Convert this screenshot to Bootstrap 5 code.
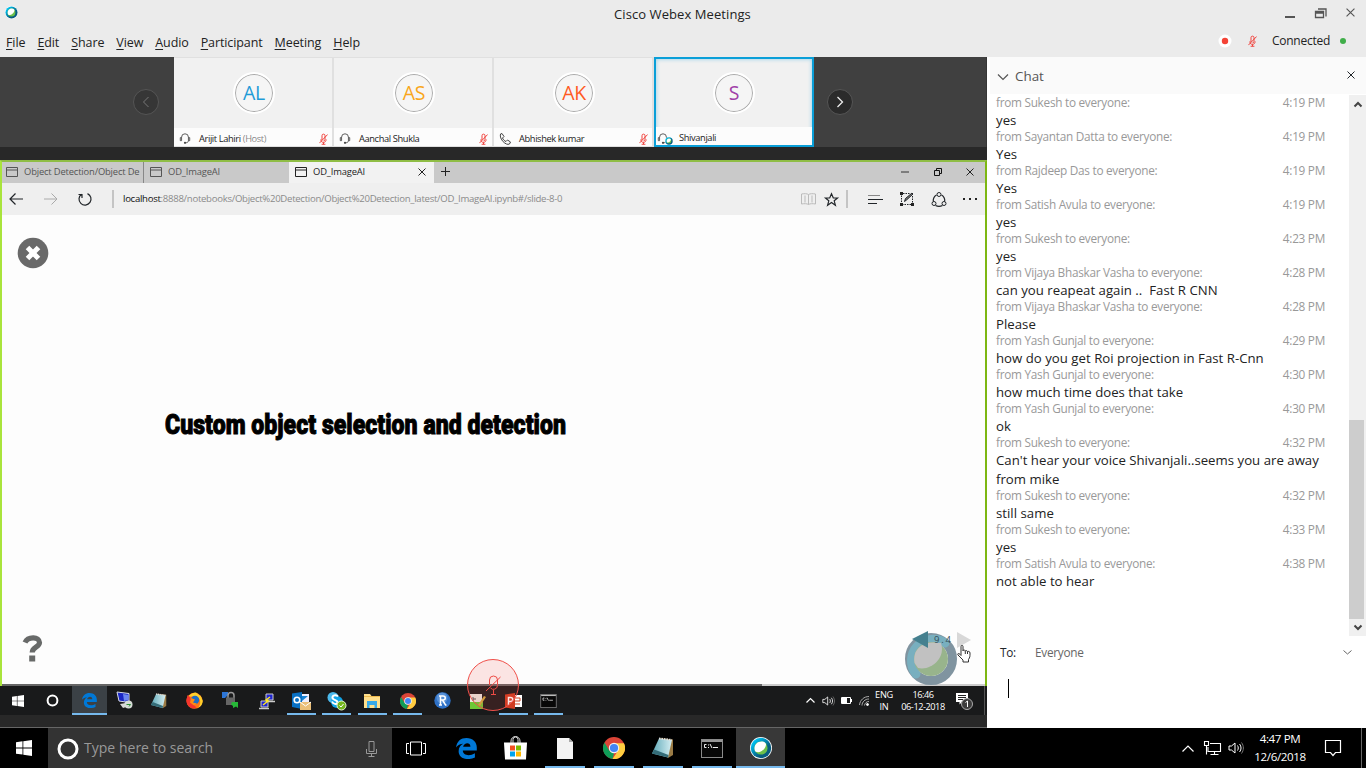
<!DOCTYPE html>
<html lang="en">
<head>
<meta charset="utf-8">
<title>Cisco Webex Meetings</title>
<link rel="stylesheet" href="https://cdn.jsdelivr.net/npm/bootstrap@5.3.0/dist/css/bootstrap.min.css">
<style>
body{width:1366px;height:768px;overflow:hidden;font-family:"Open Sans","Noto Sans",sans-serif;font-size:13px;line-height:1.2;color:#222;background:#ebebeb}
svg{display:block;flex:none;overflow:visible}
.line-ic{fill:none;stroke:currentColor}
.title-row{height:29px}
.app-title{width:140px;margin-left:597px;font-size:13px;letter-spacing:.08px;white-space:nowrap}
.win-controls{color:#555;padding-right:11px}
.menu-row{height:28px;padding:0 20px 2px 6px;gap:12px;font-size:12.5px;letter-spacing:-.1px}
.menu-row u{text-underline-offset:2px}
.stage{height:671px}
.left-pane{width:987px;background:#282828}
.people{height:90px;background:#404040;border-right:1px solid #363636}
.round-btn{width:26px;height:26px;border-radius:50%;background:#2b2b2b;border:1px solid #555;color:#eee}
.round-btn.off{margin:0 15px 0 133px;color:#777;background:#363636}
.tile{width:160px;height:90px;background:#f1f1f1;border:1px solid #e0e0e0;border-left:0;border-right-width:2px}
.tile .face{padding-left:2px}
.tile.active-tile{border:2px solid #0a9fd8;box-shadow:inset 0 0 4px #8fd0ea}
.tile.active-tile .face{padding-left:0}
.avatar{width:42px;height:42px;border-radius:50%;border:2px solid #fff;background:#f5f5f5;box-shadow:inset 0 0 0 1px #aaa;font-size:19.5px;letter-spacing:-.3px;padding-bottom:1px}
.tile-foot{height:18px;background:#fcfcfc;font-size:9.3px;letter-spacing:-.38px;color:#222;padding:3px 4px 0 5px}
.remote{margin-top:13px;height:526px;border:2px solid #7db713;border-left-color:#a9e43c;border-top-color:#8fbd45;border-bottom:0;background:#fdfdfd}
.tabs{height:21px;background:#c9c9c9;font-size:9.4px;letter-spacing:-.16px;color:#555}
.tab-item{width:145px;padding:0 0 2px 4px;gap:6px;height:21px}
.addr{height:32px;background:#efefef;font-size:9.6px;letter-spacing:-.29px;color:#8b8b8b}
.cell{display:flex;align-items:center;justify-content:center;flex:none;height:100%}
.tabs .cell{padding-bottom:2px}
.rule{width:2px;height:18px;background:#c4c4c4;flex:none}
.slide{height:469px}
.slide-x{left:15px;top:22px}
.slide-q{left:21px;top:420px}
.slide-title{left:163px;top:192px;font-family:Roboto,sans-serif;font-weight:900;font-size:28.5px;line-height:36px;color:#000;white-space:nowrap;transform:scaleX(.811);transform-origin:0 50%;-webkit-text-stroke:1px #000}
.progress-line{height:2px;background:#ccc}
.progress-line div{height:2px;width:760px;background:#666}
.rbar{height:29px;background:#191a1b;color:#fff;margin:0 -2px;position:relative}
.rcell{width:35.3px;height:29px;display:flex;align-items:center;justify-content:center;flex:none}
.lit{background:linear-gradient(#76b9ed,#76b9ed) center bottom/29px 2px no-repeat}
.lit-full{background:linear-gradient(#76b9ed,#76b9ed) center bottom/100% 2px no-repeat #3b4146}
.rtime{font-size:9.2px;line-height:12px;text-align:center;letter-spacing:-.3px}
.foot-gap{margin-top:29px;height:13px;border-bottom:1px solid #666}
.float-mic{left:467px;top:602px;width:52px;height:52px;border-radius:50%;border:1px solid #f0504a;background:#f0504a24;color:#ee4b45}
.float-ball{left:905px;top:576px}
.hand{left:957px;top:588px}
.arrows{left:912px;top:574px;font-size:9.5px;color:#334d55}
.chat{width:379px;background:#fff}
.chat-head{height:37px;margin-left:3px;background:#fafafa;color:#555;font-size:13.4px;padding:2px 11px 0 8px}
.chat-list{height:541px;width:353px;padding:0 15px 0 9px;margin-top:1px}
.who{font-size:11.8px;line-height:15px;height:16px;color:#999;letter-spacing:-.28px}
.msg{font-size:13.2px;line-height:19px;color:#222;white-space:pre;margin-bottom:-1px;letter-spacing:.02px}
.sbar{width:17px;height:541px;background:#f0f0f0;margin-top:1px}
.sthumb{width:15px;height:199px;background:#cdcdcd;margin-top:auto}
.to-row{height:34px;padding:0 14px 1px 13px;font-size:11.8px;letter-spacing:-.25px;color:#666}
.caret{width:1px;height:19px;background:#000;margin:9px 0 0 21px}
.taskbar{height:40px;background:#000;color:#fff}
.search{width:344px;background:#333;color:#999;font-size:14px;letter-spacing:.02px;padding:1px 15px 0 8px;gap:5px}
.tcell{width:49px;height:40px;display:flex;align-items:center;justify-content:center;flex:none}
.tcell.lit{background-size:40px 2px}
.clock{font-size:11.6px;line-height:18px;letter-spacing:-.4px;text-align:center}
</style>
<script src="https://cdn.jsdelivr.net/npm/bootstrap@5.3.0/dist/js/bootstrap.bundle.min.js"></script>
</head>
<body>
<svg width="0" height="0" class="position-absolute">
<defs>
<linearGradient id="gball" x1="0" x2="1" y1="0" y2="1"><stop offset=".2" stop-color="#00bceb"/><stop offset=".65" stop-color="#075c80"/></linearGradient>
<linearGradient id="gnote" x1="0" x2="1"><stop offset="0" stop-color="#5fa9b8"/><stop offset="1" stop-color="#d5eef2"/></linearGradient>
<symbol id="webex" viewBox="0 0 20 20"><circle cx="10" cy="10" r="10" fill="#fff"/><circle cx="10" cy="10" r="9.3" fill="url(#gball)"/><circle cx="10" cy="10" r="6" fill="#6cc04a"/><path d="M4.6 13C2.8 8 6 4 10.500 4C14 4 15.500 6 14 9C12 13 8 15 4.600 13Z" fill="#fff"/></symbol>
<symbol id="micoff" viewBox="0 0 12 16"><path d="M4 9.500V3.500a2 2 0 0 1 4 0v5a2 2 0 0 1-2 2M2.500 8.500c0 3 1.500 4 3.500 4s3.500-1.500 3.500-4M6 12.500V15M3.500 15h5M11.500 2L.500 13.500" fill="none" stroke="#f0403a" stroke-width="1.300"/></symbol>
<symbol id="headset" viewBox="0 0 14 14"><path d="M3 9.500V5.500a4 4 0 0 1 8 0v4M3 6H1.500v3.500H3M11 6h1.500v3.500H11M11 9.500c0 2-2 2.500-3.500 2.500" fill="none" stroke="#444"/><circle cx="7" cy="12" r="1.300" fill="#444"/></symbol>
<symbol id="win" viewBox="0 0 16 16"><path fill="#fff" d="M0 2.200L6.500 1.300V7.500H0zM7.300 1.200L16 0V7.500H7.300zM0 8.400h6.500v6.200L0 13.700zM7.300 8.400H16V16l-8.700-1.200z"/></symbol>
<symbol id="edge" viewBox="0 0 20 20"><path fill="#0078d7" d="M0 9C1 3 4.600 0 10 0c6 0 10 4 9.800 9.500V12H6.500c0 5 7 5.500 11.500 2.500v4C11 22 2.500 19.500 2.500 12.500C2.500 9 4.500 6.500 7 5.500C4 5.500 1.500 7 0 9zM6.800 8.300h6.900C14 3.500 7.500 4 6.800 8.300z"/></symbol>
<symbol id="chrome" viewBox="0 0 22 22"><circle cx="11" cy="11" r="11" fill="#db4437"/><path d="M1.500 5.500L6.200 13.500L11 16.500L9.500 22A11 11 0 0 1 1.500 5.500z" fill="#0f9d58"/><path d="M11 6.200H20.900A11 11 0 0 1 9.500 22L15.200 13.500z" fill="#ffcd40"/><circle cx="11" cy="11" r="5.200" fill="#f1f1f1"/><circle cx="11" cy="11" r="4.100" fill="#4285f4"/></symbol>
<symbol id="note" viewBox="0 0 22 22"><path d="M8 1L21 2.500V18L16 21z" fill="#9a7b45"/><path d="M7 1.500L20 3L16 20.500L0 16.500z" fill="url(#gnote)"/><path d="M0 16.500L2.200 12.500L16.500 18L16 20.500z" fill="#346c78"/><path d="M7 1.500L20 3" stroke="#ddd" stroke-width="2" stroke-dasharray="1.500 1"/></symbol>
<symbol id="cmd" viewBox="0 0 22 19"><rect x=".5" y=".5" width="21" height="18" fill="#080808" stroke="#8a8a8a"/><path d="M1 2h20" stroke="#bbb" stroke-width="1.600"/><path d="M5.500 5.500H3.500v3h2M7.500 5.500v1M7.500 8v1M9 5l2 4M12 8.500h5" stroke="#eee" fill="none"/></symbol>
<symbol id="vol" viewBox="0 0 16 14"><path d="M1 5h2.500L7 2v10L3.500 9H1zM9.500 4.500c1 1.500 1 3.500 0 5M11.500 3c2 2.500 2 5.500 0 8" fill="none" stroke="currentColor"/><path d="M13.500 1.500c2.500 3.500 2.500 7.500 0 11" fill="none" stroke="#777"/></symbol>
<symbol id="winic" viewBox="0 0 12 10"><path d="M.5.500h11v9H.500zM.500 3h11" fill="none" stroke="currentColor"/></symbol>
<symbol id="cross" viewBox="0 0 8 8"><path d="M.5.500l7 7M7.500.500l-7 7" fill="none" stroke="currentColor"/></symbol>
</defs>
</svg>

<header>
  <div class="title-row d-flex align-items-center">
    <svg class="mb-1" style="margin-left:5px" width="13" height="13"><use href="#webex"/></svg>
    <div class="app-title" style="margin-left:596px">Cisco Webex Meetings</div>
    <div class="win-controls d-flex align-items-center ms-auto pb-1">
      <svg width="10" height="10" class="line-ic me-3"><path d="M0 9h10" stroke-width="2"/></svg>
      <svg width="11" height="11" class="line-ic ms-1 me-3"><path d="M.5 4.500h8v6h-8zM.500 6h8M3 2h8v7.500" stroke-width="1.300"/></svg>
      <svg width="9" height="9" viewBox="0 0 8 8" class="ms-1"><use href="#cross"/></svg>
    </div>
  </div>
  <div class="menu-row d-flex align-items-center">
    <span><u>F</u>ile</span><span><u>E</u>dit</span><span><u>S</u>hare</span><span><u>V</u>iew</span><span><u>A</u>udio</span><span><u>P</u>articipant</span><span><u>M</u>eeting</span><span><u>H</u>elp</span>
    <div class="d-flex align-items-center ms-auto" style="padding-bottom:2px">
      <svg width="14" height="14"><circle cx="6" cy="7" r="6.500" fill="#fff"/><circle cx="6" cy="7" r="3.200" fill="#f44336"/></svg>
      <svg width="9" height="12" style="margin:0 15px"><use href="#micoff"/></svg>
      <span style="font-size:12px;letter-spacing:-.25px">Connected</span>
      <svg width="6" height="6" style="margin-left:10px"><circle cx="3" cy="3" r="3" fill="#3fae49"/></svg>
    </div>
  </div>
</header>

<main class="stage d-flex">
  <section class="left-pane position-relative flex-shrink-0">
    <div class="people d-flex align-items-center">
      <div class="round-btn off d-flex align-items-center justify-content-center"><svg width="6" height="10" class="line-ic"><path d="M5.500 0l-5 5 5 5"/></svg></div>
      <div class="tile d-flex flex-column"><div class="face flex-fill d-flex align-items-center justify-content-center"><div class="avatar d-flex align-items-center justify-content-center" style="color:#1e9bd7">AL</div></div><div class="tile-foot d-flex align-items-center"><svg width="12" height="13"><use href="#headset"/></svg><span class="ms-2">Arijit Lahiri <span class="text-black-50">(Host)</span></span><svg width="9" height="12" class="ms-auto"><use href="#micoff"/></svg></div></div>
      <div class="tile d-flex flex-column"><div class="face flex-fill d-flex align-items-center justify-content-center"><div class="avatar d-flex align-items-center justify-content-center" style="color:#f9a61a">AS</div></div><div class="tile-foot d-flex align-items-center"><svg width="12" height="13"><use href="#headset"/></svg><span class="ms-2">Aanchal Shukla</span><svg width="9" height="12" class="ms-auto"><use href="#micoff"/></svg></div></div>
      <div class="tile d-flex flex-column"><div class="face flex-fill d-flex align-items-center justify-content-center"><div class="avatar d-flex align-items-center justify-content-center" style="color:#ff5a1f">AK</div></div><div class="tile-foot d-flex align-items-center"><svg width="12" height="12" class="line-ic"><path d="M1.500 1L3 .500l2 3-1.500 1.500c.500 1.500 2 3 3.500 3.500L8.500 7l3 2-1 2C7 13 0 6 1.500 1z" stroke="#444"/></svg><span class="ms-2">Abhishek kumar</span><svg width="9" height="12" class="ms-auto"><use href="#micoff"/></svg></div></div>
      <div class="tile active-tile d-flex flex-column"><div class="face flex-fill d-flex align-items-center justify-content-center"><div class="avatar d-flex align-items-center justify-content-center" style="color:#a040a8">S</div></div><div class="tile-foot d-flex align-items-center" style="padding-left:1px;padding-top:4px"><svg width="16" height="13"><use href="#headset" width="12" height="13"/><use href="#webex" x="8" y="5" width="8" height="8"/></svg><span style="margin-left:6px">Shivanjali</span></div></div>
      <div class="round-btn d-flex align-items-center justify-content-center" style="margin-left:13px"><svg width="6" height="10" class="line-ic"><path d="M.5 0l5 5-5 5" stroke-width="1.300"/></svg></div>
    </div>

    <div class="remote">
      <div class="tabs d-flex">
        <div class="tab-item d-flex align-items-center" style="width:141px"><svg width="12" height="10"><use href="#winic"/></svg><span class="text-nowrap">Object Detection/Object De</span></div>
        <div class="tab-item d-flex align-items-center" style="width:146px;border-left:1px solid #888;padding-left:6px"><svg width="12" height="10"><use href="#winic"/></svg><span>OD_ImageAI</span></div>
        <div class="tab-item d-flex align-items-center" style="background:#f2f2f2;color:#222;padding:0 8px 2px 6px"><svg width="12" height="10"><use href="#winic"/></svg><span>OD_ImageAI</span><svg width="8" height="8" class="ms-auto"><use href="#cross"/></svg></div>
        <div class="cell" style="width:23px;color:#222"><svg width="9" height="9" class="line-ic"><path d="M4.500 0v9M0 4.500h9"/></svg></div>
        <div class="cell ms-auto" style="width:33px"><svg width="8" height="2"><path d="M0 1h8" stroke="#333"/></svg></div>
        <div class="cell" style="width:33px;color:#111"><svg width="8" height="8" class="line-ic"><path d="M.5 2.500h5v5h-5zM2.500 2V.500h5v5H6"/></svg></div>
        <div class="cell" style="width:31px;color:#222"><svg width="8" height="8"><use href="#cross"/></svg></div>
      </div>
      <div class="addr d-flex align-items-center">
        <div class="cell text-dark" style="width:28px"><svg width="14" height="12" class="line-ic"><path d="M14 6H1M6.500.500L1 6l5.500 5.500" stroke-width="1.200"/></svg></div>
        <div class="cell" style="width:42px;color:#aaa"><svg width="14" height="12" class="line-ic"><path d="M0 6h13M7.500.500L13 6l-5.500 5.500"/></svg></div>
        <div class="cell text-dark" style="width:26px"><svg width="14" height="14" class="line-ic"><path d="M9.500 1.600A6 6 0 1 1 3.500 2.200M.500 2.500h3.500V6" stroke-width="1.200"/></svg></div>
        <div class="rule" style="margin-left:14px"></div>
        <span class="text-nowrap" style="margin-left:9px"><span style="color:#111">localhost</span>:8888/notebooks/Object%20Detection/Object%20Detection_latest/OD_ImageAI.ipynb#/slide-8-0</span>
        <div class="cell ms-auto" style="width:24px;color:#bbb"><svg width="15" height="12" class="line-ic"><path d="M7.500 11.500V1.500C6 .500 3 .500.500 1v10c2.500-.500 5.500-.500 7 .500zM7.500 1.500c1.500-1 4.500-1 7-.500v10c-2.500-.500-5.500-.500-7 .500M4 2.500v7M11 2.500v7"/></svg></div>
        <div class="cell text-dark" style="width:23px"><svg width="13" height="13" class="line-ic"><path d="M6.500.800L8.300 5h4.200L9.200 7.800l1.200 4.400L6.500 9.500l-3.900 2.700 1.200-4.400L.500 5h4.200z" stroke-width="1.200"/></svg></div>
        <div class="cell" style="width:8px"><div class="rule"></div></div>
        <div class="cell text-dark" style="width:32px;margin-left:8px"><svg width="15" height="10" class="line-ic"><path d="M0 1.500h12" stroke="#888"/><path d="M0 5.500h15M0 9.500h9"/></svg></div>
        <div class="cell text-dark" style="width:32px"><svg width="14" height="14" class="line-ic"><path d="M1.500 12.500V1.500H10M12.500 4v8.500h-11" stroke-dasharray="1.500 1"/><path d="M4.500 9.500l1-3 6.500-5.500 1 1-6.500 6z" fill="#777"/><path d="M0 0h3v3H0zM0 11h3v3H0zM11 11h3v3h-3z" fill="#222" stroke="none"/></svg></div>
        <div class="cell text-dark" style="width:32px"><svg width="16" height="15" class="line-ic"><path d="M5.500 3C3 4.500 2 6.500 2.300 9.500M10.500 3c2.500 1.500 3.500 3.500 3.200 6.500M4.500 13.500c2 1 5 1 7 0" stroke-width="1.200"/><circle cx="8" cy="2.500" r="2"/><circle cx="3" cy="11.500" r="2"/><circle cx="13" cy="11.500" r="2"/></svg></div>
        <div class="cell" style="width:30px"><svg width="14" height="2"><path d="M0 0h2v2H0zM6 0h2v2H6zM12 0h2v2h-2z" fill="#222"/></svg></div>
      </div>
      <div class="slide position-relative">
        <svg class="slide-x position-absolute" width="32" height="32"><circle cx="16" cy="16" r="15.300" fill="#696969"/><path d="M10.500 10.500l11 11M21.500 10.500l-11 11" stroke="#fff" stroke-width="5"/></svg>
        <div class="slide-title position-absolute">Custom object selection and detection</div>
        <svg class="slide-q position-absolute" width="20" height="27"><path d="M2 7.500C5 1 16.500 1.500 16.500 7.500C16.500 12.500 9.200 11.500 9.200 17.500" fill="none" stroke="#686a69" stroke-width="5.200"/><path d="M6.200 20.500h6v6h-6z" fill="#686a69"/></svg>
      </div>
      <div class="progress-line"><div></div></div>
      <div class="rbar d-flex">
        <div class="rcell" style="width:35px"><svg width="12" height="12"><use href="#win"/></svg></div>
        <div class="rcell" style="width:36.500px;padding-right:2px"><svg width="13" height="13"><circle cx="6.500" cy="6.500" r="4.900" fill="none" stroke="#fff" stroke-width="2"/></svg></div>
        <div class="rcell lit-full" style="width:35px"><svg width="15" height="15"><use href="#edge"/></svg></div>
        <div class="rcell"><svg width="17" height="17"><path d="M1 0l12 1.500v9L3 9z" fill="#1a26c4" stroke="#d7dce8"/><path d="M7 2l6 1-1 5-4 1z" fill="#6b86f0"/><path d="M4 12l6-1 3 3-6 2z" fill="#d8d8d8"/><circle cx="12.500" cy="12.500" r="4" fill="#d5dcd6"/><path d="M10.500 12.500h4l-1.500 2" stroke="#2c8a35" fill="none"/></svg></div>
        <div class="rcell"><svg width="16" height="16"><use href="#note"/></svg></div>
        <div class="rcell"><svg width="17" height="17"><circle cx="8.500" cy="8.800" r="8" fill="#ff7516"/><path d="M1 5C4 3 7 0 10 .500l5 4 1.800 4.500a8 8 0 0 1-5 7c4-4 3-10-2-12z" fill="#ffd02b"/><path d="M1.200 5A8 8 0 0 0 7 16.500l3.500-1L6 11 4 5 1.500 3z" fill="#f5352c"/><circle cx="9" cy="8" r="4.200" fill="#1d6dc4"/><path d="M5 6l4 1.500-2 3 4 1-3 2-4-3z" fill="#ff8a14"/></svg></div>
        <div class="rcell"><svg width="17" height="17"><path d="M0 0h6v3L3 6H0z" fill="#2d76d7"/><path d="M6 6V3.500a3 3 0 0 1 6 0V6" stroke="#999" stroke-width="1.500" fill="none"/><path d="M4 5.500h9V13H4z" fill="#666"/><path d="M10 10h6v6l-2-1.500-3 1.500V14l-2-1.500z" fill="#27b838"/></svg></div>
        <div class="rcell ps-1"><svg width="16" height="16"><path d="M7 1h7v6H7zM2 8h7v6H2z" fill="#2027d1" stroke="#ccc"/><path d="M7 8.500h9M0 15.500h10" stroke="#ccc" stroke-width="1.500"/><path d="M11 4L7 7l2 1-5 4" stroke="#ffe91d" stroke-width="1.500" fill="none"/></svg></div>
        <div class="rcell lit" style="margin-left:1px"><svg width="19" height="18"><path d="M8 2h9v9H8z" fill="#eef"/><path d="M0 1.500L10 0v17L0 15z" fill="#0870c4"/><circle cx="5" cy="8" r="2.800" fill="none" stroke="#fff" stroke-width="1.600"/><path d="M10 4h6l-6 5z" fill="#1683d5"/><path d="M8 10h11v8H8z" fill="#eabf79"/><path d="M8 10l5.500 4 5.500-4" stroke="#fff" fill="none"/></svg></div>
        <div class="rcell lit"><svg width="19" height="18"><circle cx="6" cy="5.500" r="5.500" fill="#4bb9ec"/><circle cx="10" cy="10" r="6" fill="#12a5e8"/><path d="M11 4.500C9 2 5 3.500 5.500 6S11 8 10.500 10.500 6 12 5 9.500" stroke="#fff" stroke-width="2" fill="none"/><circle cx="14.500" cy="13.500" r="4.500" fill="#74b51c" stroke="#e5f5ce"/><path d="M12.500 13.500l1.500 1.500 2.500-3" stroke="#fff" fill="none"/></svg></div>
        <div class="rcell lit"><svg width="16" height="14"><path d="M0 0h6l1.500 2H16v12H0z" fill="#ffdf8c"/><path d="M0 2.500h16" stroke="#eeb94c"/><path d="M3 7h10v7h-2.500v-3h-5v3H3z" fill="#37a9e8"/></svg></div>
        <div class="rcell lit"><svg width="16" height="16"><use href="#chrome"/></svg></div>
        <div class="rcell"><svg width="17" height="17"><circle cx="8.500" cy="8.500" r="8.200" fill="#2e71c7"/><circle cx="8" cy="6" r="5.500" fill="#75a7df" opacity=".6"/><path d="M5 4h4c3 0 3 4 0 4H6.500M6.500 4v9M5 13h3M8.500 8l3 5h1" stroke="#fff" stroke-width="1.500" fill="none"/></svg></div>
        <div class="rcell"><svg width="16" height="16"><path d="M0 1h12v15H0z" fill="#e8e8e0"/><path d="M0 9h13v7H0z" fill="#6dc736"/><path d="M3 4v4M3 6h3" stroke="#555"/><path d="M8 12L14 3l2 1-6 9z" fill="#cfa83f"/></svg></div>
        <div class="rcell lit"><svg width="17" height="16"><path d="M8 2h9v12H8z" fill="#fff"/><path d="M10 5h5v3h-5M10 11h5" stroke="#d14424" fill="none"/><path d="M0 1.500L10 0v16L0 14.500z" fill="#d13b20"/><path d="M3.500 12V4.500h2c3 0 3 4 0 4h-2" stroke="#fff" stroke-width="1.500" fill="none"/></svg></div>
        <div class="rcell lit"><svg width="17" height="14"><use href="#cmd"/></svg></div>
        <div class="d-flex align-items-center ms-auto">
          <svg width="9" height="5" class="line-ic"><path d="M.5 4.500l4-4 4 4" stroke-width="1.200"/></svg>
          <svg width="13" height="12" style="margin-left:7px"><use href="#vol"/></svg>
          <svg width="11" height="7" style="margin-left:6px"><path d="M.5.500h9v6h-9zM10.500 2v3" stroke="#fff" fill="none"/><path d="M1 1h5v5H1z" fill="#fff"/></svg>
          <svg width="11" height="10" class="line-ic" style="margin-left:7px"><path d="M.5 9C1 4 5 .500 10 .500M3 9.500C3 6 6 3 10 3M5.500 9.500C6 7 7.500 5.500 10 5.500" stroke="#aaa"/><circle cx="8.500" cy="8.500" r="1" fill="#fff"/></svg>
          <div class="rtime" style="margin-left:5px;width:18px">ENG<br>IN</div>
          <div class="rtime text-nowrap" style="margin-left:8px;width:44px;letter-spacing:-.45px">16:46<br>06-12-2018</div>
          <svg width="18" height="18" style="margin:3px 10px 0 11px"><path d="M0 0h12v9H6L3.500 11.500V9H0z" fill="#fff"/><path d="M2 2.500h8M2 4.500h8M2 6.500h5" stroke="#222"/><circle cx="11" cy="11" r="5.500" fill="#3c3c3c" stroke="#aaa"/><path d="M9.500 9.500L11.500 8v6" stroke="#fff" fill="none"/></svg>
          <div style="width:1px;height:29px;background:#555;margin-right:2px"></div>
        </div>
      </div>
    </div>
    <div class="foot-gap"></div>

    <svg class="float-ball position-absolute" width="52" height="52"><circle cx="26" cy="26" r="21.500" fill="none" stroke="#8094a0" stroke-width="9"/><path d="M11 41A21.500 21.500 0 0 1 40 10" fill="none" stroke="#78afbf" stroke-width="9" stroke-linecap="round"/><circle cx="26" cy="26" r="17" fill="#98b48c"/><path d="M9.500 30C7 15 19 7 36 10C41 25 26 38 13 35Z" fill="#c1c1c1"/></svg>
    <div class="arrows position-absolute d-flex align-items-center"><svg width="16" height="18"><path d="M0 8L16 0v17z" fill="#45808f"/></svg><span class="text-nowrap" style="margin:0 3px 0 6px;letter-spacing:1.800px">9.4</span><svg width="16" height="16"><path d="M1 0v16l14-8z" fill="#d8d8d8"/></svg></div>
    <svg class="hand position-absolute" width="14" height="18"><path d="M4 10.500V1.500C4 0 6 0 6 1.500V6c0-1.500 2.300-1.500 2.300.500 0-1.500 2.200-1.200 2.200.500 0-1 2.500-1 2.500 1 0 4 0 4-1.500 6.500V17H6v-2L1 10c-1-1.500 1-2.500 3 .500zM8.300 6.500V9M10.500 7v2" fill="#fff" stroke="#333"/></svg>
    <div class="float-mic position-absolute d-flex align-items-center justify-content-center"><svg width="16" height="20" class="line-ic"><path d="M4.500 10V5a4 4 0 0 1 8 0v5.500a4 4 0 0 1-7 2.500M8.500 15v4M6 19.500h5M15.500 2L1 16"/></svg></div>
  </section>

  <aside class="chat d-flex flex-column">
    <div class="chat-head d-flex align-items-center">
      <svg width="10" height="6" class="line-ic"><path d="M0 .500l5 5 5-5" stroke-width="1.200"/></svg><span style="margin-left:7px">Chat</span>
      <svg width="8" height="8" class="ms-auto mb-1 text-dark"><use href="#cross"/></svg>
    </div>
    <div class="d-flex">
      <div class="chat-list" id="log"></div>
      <div class="sbar ms-auto d-flex flex-column align-items-center">
        <svg width="8" height="5" class="line-ic" style="margin-top:7px"><path d="M.5 4.500l3.500-3.500 3.500 3.500" stroke="#444" stroke-width="2"/></svg>
        <div class="sthumb align-self-start"></div>
        <svg width="8" height="5" class="line-ic" style="margin:6px 0"><path d="M.5.500L4 4l3.500-3.500" stroke="#444" stroke-width="2"/></svg>
      </div>
    </div>
    <div class="to-row d-flex align-items-center"><span class="text-dark">To:</span><span style="margin-left:19px">Everyone</span><svg width="9" height="5" class="line-ic ms-auto"><path d="M.5.500l4 3.500 4-3.500"/></svg></div>
    <div class="caret"></div>
  </aside>
</main>

<footer class="taskbar d-flex">
  <div class="tcell" style="width:48px"><svg width="16" height="16"><use href="#win"/></svg></div>
  <div class="search d-flex align-items-center"><svg width="23" height="22"><circle cx="12" cy="11" r="9" fill="none" stroke="#fff" stroke-width="3"/></svg><span>Type here to search</span><svg width="11" height="16" class="line-ic ms-auto"><path d="M3 .500h5v10H3zM.500 8v4.500h10V8M5.500 12.500V16M2.500 15.500h6"/></svg></div>
  <div class="tcell" style="width:50px"><svg width="20" height="15" class="line-ic" style="margin-right:2px"><path d="M4.500 1h11v13h-11zM3 2.500H.500v10H3M17 2.500h2.500v10H17"/></svg></div>
  <div class="tcell"><svg width="21" height="21"><use href="#edge"/></svg></div>
  <div class="tcell"><svg width="23" height="23"><path d="M7 6V4a4 4 0 0 1 9 0v2M9 6V2.500a2.500 2.500 0 0 1 5 0V6" fill="none" stroke="#ddd"/><path d="M0 5.500h23L22 22.500H1z" fill="#fff"/><path d="M6 8.500h5v5H6z" fill="#f25022"/><path d="M12 8.500h5v5h-5z" fill="#7fba00"/><path d="M6 14.500h5v5H6z" fill="#00a4ef"/><path d="M12 14.500h5v5h-5z" fill="#ffb900"/></svg></div>
  <div class="tcell lit"><svg width="16" height="21"><path d="M0 0h12l4 4v17H0z" fill="#f3f3f3"/><path d="M12 0v4h4z" fill="#aaa"/></svg></div>
  <div class="tcell lit"><svg width="22" height="22"><use href="#chrome"/></svg></div>
  <div class="tcell lit"><svg width="22" height="22"><use href="#note"/></svg></div>
  <div class="tcell lit"><svg width="22" height="19"><use href="#cmd"/></svg></div>
  <div class="tcell lit-full" style="width:49px;background-color:#383838"><svg width="22" height="22"><use href="#webex"/></svg></div>
  <div class="d-flex align-items-center ms-auto">
    <svg width="12" height="7" class="line-ic"><path d="M.5 6.500L6 1l5.500 5.500" stroke-width="1.200"/></svg>
    <svg width="17" height="14" class="line-ic" style="margin-left:10px"><path d="M6 2.500h10.500v8H4V6M10.500 10.500V13M6.500 13.500h8M.500.500h4v4h-4zM2.500 4.500v9" stroke-width="1.100"/></svg>
    <svg width="16" height="14" style="margin-left:7px"><use href="#vol"/></svg>
    <div class="clock" style="margin-left:9px;width:54px">4:47 PM<br>12/6/2018</div>
    <svg width="16" height="16" class="line-ic" style="margin-left:18px"><path d="M.5.500h15v12h-5L8 15.500 5.500 12.500h-5z" stroke-width="1.200"/></svg>
    <div style="width:1px;height:40px;background:#666;margin:0 4px 0 20px"></div>
  </div>
</footer>
<script>
const chat=[["Sukesh","4:19","yes"],["Sayantan Datta","4:19","Yes"],["Rajdeep Das","4:19","Yes"],["Satish Avula","4:19","yes"],["Sukesh","4:23","yes"],["Vijaya Bhaskar Vasha","4:28","can you reapeat again ..\u00a0 Fast R CNN"],["Vijaya Bhaskar Vasha","4:28","Please"],["Yash Gunjal","4:29","how do you get Roi projection in Fast R-Cnn"],["Yash Gunjal","4:30","how much time does that take"],["Yash Gunjal","4:30","ok"],["Sukesh","4:32","Can't hear your voice Shivanjali..seems you are away\nfrom mike"],["Sukesh","4:32","still same"],["Sukesh","4:33","yes"],["Satish Avula","4:38","not able to hear"]];
document.getElementById("log").innerHTML=chat.map(([n,t,m])=>`<div class="who d-flex justify-content-between"><span>from ${n} to everyone:</span><span>${t} PM</span></div><div class="msg">${m}</div>`).join("");
</script>
</body>
</html>
